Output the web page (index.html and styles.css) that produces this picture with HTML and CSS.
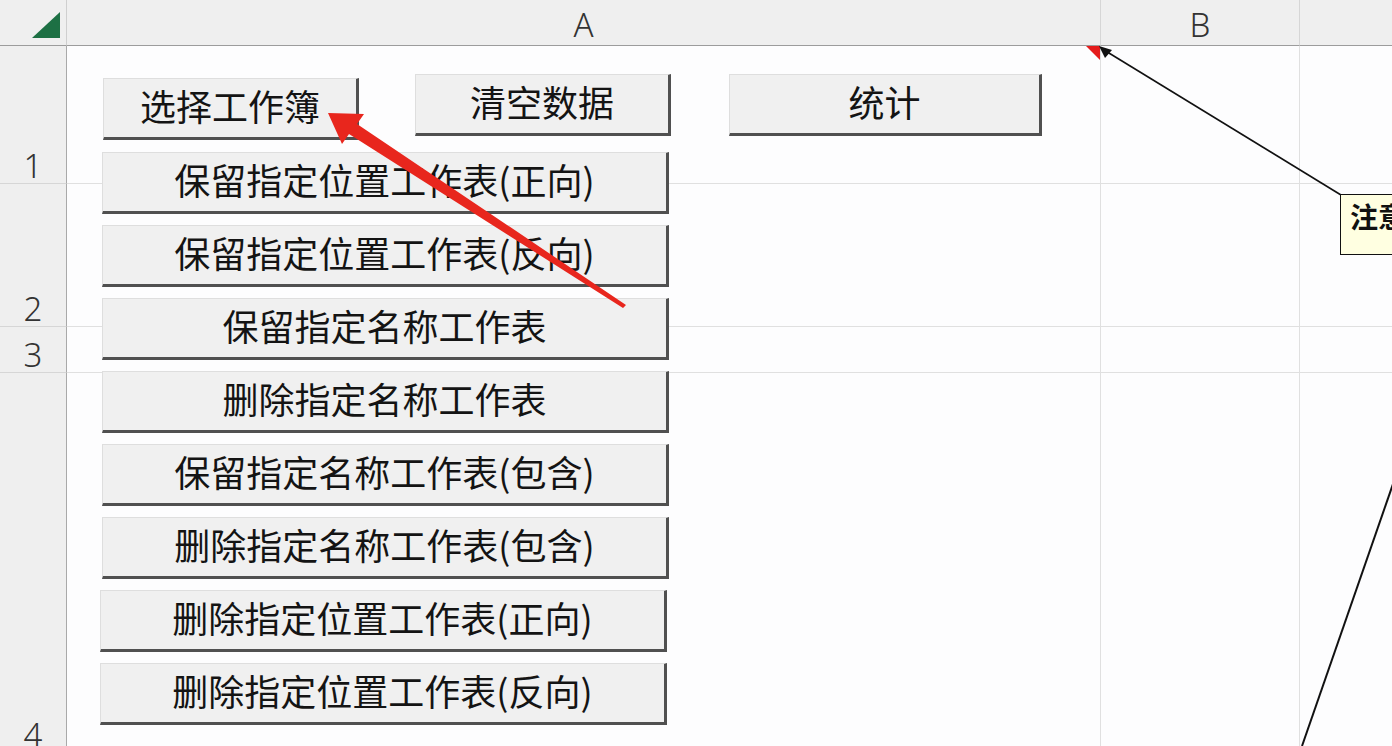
FILE: index.html
```html
<!DOCTYPE html>
<html lang="zh-CN">
<head>
    <meta charset="UTF-8">
    <title>工作表管理</title>
    <link rel="stylesheet" href="styles.css">
</head>
<body>
    <div class="sheet">
        <!-- header row -->
        <div class="corner">
            <svg width="67" height="46" viewBox="0 0 67 46"><polygon points="32,38 60,38 60,12" fill="#1d7044"/></svg>
        </div>
        <div class="colhead">A</div>
        <div class="colhead">B</div>
        <div class="colhead last"></div>

        <!-- row 1 -->
        <div class="rowhead">1</div>
        <div class="cell a1"><span class="comment-mark"></span></div>
        <div class="cell"></div>
        <div class="cell last"></div>

        <!-- row 2 -->
        <div class="rowhead">2</div>
        <div class="cell"></div>
        <div class="cell"></div>
        <div class="cell last"></div>

        <!-- row 3 -->
        <div class="rowhead">3</div>
        <div class="cell"></div>
        <div class="cell"></div>
        <div class="cell last"></div>

        <!-- row 4 -->
        <div class="rowhead">4</div>
        <div class="cell"></div>
        <div class="cell"></div>
        <div class="cell last"></div>
    </div>

    <!-- form buttons sitting on the sheet -->
    <div class="controls">
        <div class="top-row">
            <button class="btn btn-pick">选择工作簿</button>
            <button class="btn btn-clear">清空数据</button>
            <button class="btn btn-count">统计</button>
        </div>
        <div class="list">
            <button class="btn btn-wide">保留指定位置工作表(正向)</button>
            <button class="btn btn-wide">保留指定位置工作表(反向)</button>
            <button class="btn btn-wide">保留指定名称工作表</button>
            <button class="btn btn-wide">删除指定名称工作表</button>
            <button class="btn btn-wide">保留指定名称工作表(包含)</button>
            <button class="btn btn-wide">删除指定名称工作表(包含)</button>
            <button class="btn btn-wide shift">删除指定位置工作表(正向)</button>
            <button class="btn btn-wide shift">删除指定位置工作表(反向)</button>
        </div>
    </div>

    <!-- comment callout -->
    <div class="note">注意</div>

    <svg class="marks" width="1392" height="746" viewBox="0 0 1392 746">
        <!-- comment connectors -->
        <line x1="1104" y1="50" x2="1341" y2="195" stroke="#111" stroke-width="1.6"/>
        <polygon points="1099,46 1112,50 1105,58" fill="#111"/>
        <line x1="1393" y1="484" x2="1302" y2="746" stroke="#111" stroke-width="2"/>
        <!-- red pointer arrow -->
        <polygon points="328,113 364,114 357,124 626,305 623,308 349,134 342,144" fill="#e8261d"/>
    </svg>
</body>
</html>
```

FILE: styles.css
```css
html, body {
    margin: 0;
    padding: 0;
}

body {
    width: 1392px;
    height: 746px;
    overflow: hidden;
    position: relative;
    background: #fdfdfe;
    font-family: "Noto Sans CJK SC", "Noto Sans", sans-serif;
}

/* spreadsheet grid */
.sheet {
    display: grid;
    grid-template-columns: 67px 1034px 199px 1fr;
    grid-template-rows: 46px 138px 143px 46px 380px;
}

.corner {
    background: #efefef;
    border-right: 1px solid #cfcfcf;
    border-bottom: 1px solid #9c9c9c;
    box-sizing: border-box;
}

.corner svg {
    display: block;
}

.colhead {
    background: #efefef;
    border-right: 1px solid #d6d6d6;
    border-bottom: 1px solid #9c9c9c;
    box-sizing: border-box;
    display: flex;
    align-items: center;
    justify-content: center;
    padding-top: 4px;
    font-family: "Noto Sans", "Open Sans", sans-serif;
    font-size: 33px;
    font-weight: 300;
    color: #333;
}

.colhead.last {
    border-right: none;
}

.rowhead {
    background: #efefef;
    border-right: 1px solid #a9a9a9;
    border-bottom: 1px solid #d6d6d6;
    box-sizing: border-box;
    display: flex;
    align-items: flex-end;
    justify-content: center;
    padding-bottom: 0;
    font-family: "Noto Sans", "Open Sans", sans-serif;
    font-size: 33px;
    font-weight: 300;
    line-height: 1.02;
    color: #333;
}

.cell {
    border-right: 1px solid #e0e0e0;
    border-bottom: 1px solid #e0e0e0;
    box-sizing: border-box;
}

.cell.last {
    border-right: none;
}

.a1 {
    position: relative;
}

/* red comment indicator in the corner of A1 */
.comment-mark {
    position: absolute;
    top: 0;
    right: 0;
    width: 0;
    height: 0;
    border-top: 14px solid #e51c1c;
    border-left: 14px solid transparent;
}

/* buttons */
.controls {
    position: absolute;
    left: 100px;
    top: 72px;
}

.top-row {
    display: flex;
    align-items: flex-start;
}

.list {
    display: flex;
    flex-direction: column;
    gap: 11px;
    margin-top: 12px;
}

.btn {
    display: flex;
    align-items: center;
    justify-content: center;
    box-sizing: border-box;
    height: 62px;
    padding: 0 0 6px 0;
    background: #f0f0f0;
    border-top: 1px solid #dedede;
    border-left: 1px solid #dedede;
    border-right: 3px solid #505050;
    border-bottom: 3px solid #505050;
    font-family: "Noto Sans CJK SC", sans-serif;
    font-size: 36px;
    color: #141414;
    cursor: pointer;
}

.btn-pick {
    width: 256px;
    margin-left: 3px;
    margin-top: 6px;
}

.btn-clear {
    width: 256px;
    margin-left: 56px;
    margin-top: 2px;
}

.btn-count {
    width: 313px;
    margin-left: 58px;
    margin-top: 2px;
}

.btn-wide {
    width: 567px;
    margin-left: 2px;
}

.btn-wide.shift {
    margin-left: 0;
}

/* comment box */
.note {
    position: absolute;
    left: 1340px;
    top: 194px;
    width: 160px;
    height: 61px;
    box-sizing: border-box;
    padding: 1px 0 0 9px;
    background: #ffffe1;
    border: 1.5px solid #111;
    font-family: "Noto Sans CJK SC", sans-serif;
    font-size: 28px;
    font-weight: 700;
    color: #111;
}

.marks {
    position: absolute;
    left: 0;
    top: 0;
    pointer-events: none;
}
```
